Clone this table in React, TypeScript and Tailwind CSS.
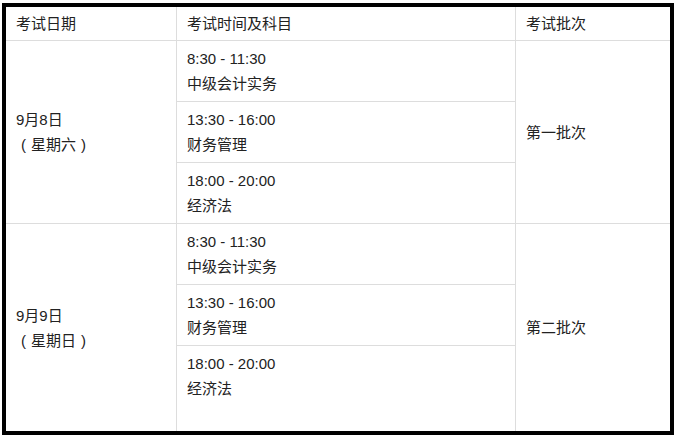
import React from 'react';

// Exam schedule table inside a thick black frame
type Slot = { time: string; subject: string };
type Group = { date: string; weekday: string; batch: string; slots: Slot[] };

const slots: Slot[] = [
  { time: '8:30 - 11:30', subject: '中级会计实务' },
  { time: '13:30 - 16:00', subject: '财务管理' },
  { time: '18:00 - 20:00', subject: '经济法' },
];

const groups: Group[] = [
  { date: '9月8日', weekday: '星期六', batch: '第一批次', slots },
  { date: '9月9日', weekday: '星期日', batch: '第二批次', slots },
];

const font = { fontFamily: '"Liberation Sans", Arial, "Noto Sans CJK SC", sans-serif' };

// full-width parens drawn centred in a 1em box, like the reference font does
function Paren({ children }: { children: React.ReactNode }) {
  return <span className="inline-block w-[15px] text-center">{children}</span>;
}

export default function App() {
  return (
    <div className="w-[677px] h-[438px] bg-white pt-[3px] pl-[2px]" style={font}>
      <div className="w-[672px] h-[432px] border-4 border-black flex flex-col text-[15px] leading-[25px] text-[#222]">
        {/* header */}
        <div className="flex h-[34px] border-b border-[#dddddd] shrink-0">
          <div className="w-[171px] border-r border-[#dddddd] px-[10px] flex items-center">考试日期</div>
          <div className="w-[339px] border-r border-[#dddddd] px-[10px] flex items-center">考试时间及科目</div>
          <div className="flex-1 px-[10px] flex items-center">考试批次</div>
        </div>

        {groups.map((g, gi) => {
          const last = gi === groups.length - 1;
          return (
            <div
              key={g.date}
              className={last ? 'flex flex-1' : 'flex h-[183px] border-b border-[#dddddd] shrink-0'}
            >
              <div className="w-[171px] border-r border-[#dddddd] px-[10px] flex flex-col justify-center">
                <div>{g.date}</div>
                <div>
                  <Paren>(</Paren>
                  {g.weekday}
                  <Paren>)</Paren>
                </div>
              </div>
              <div className="w-[339px] border-r border-[#dddddd] flex flex-col">
                {g.slots.map((s, si) => {
                  const lastSlot = si === g.slots.length - 1;
                  return (
                    <div
                      key={s.time}
                      className={
                        lastSlot
                          ? 'flex-1 px-[10px] pt-[5px]'
                          : 'h-[61px] shrink-0 border-b border-[#dddddd] px-[10px] pt-[5px]'
                      }
                    >
                      <div>{s.time}</div>
                      <div>{s.subject}</div>
                    </div>
                  );
                })}
              </div>
              <div className="flex-1 px-[10px] flex items-center">{g.batch}</div>
            </div>
          );
        })}
      </div>
    </div>
  );
}
